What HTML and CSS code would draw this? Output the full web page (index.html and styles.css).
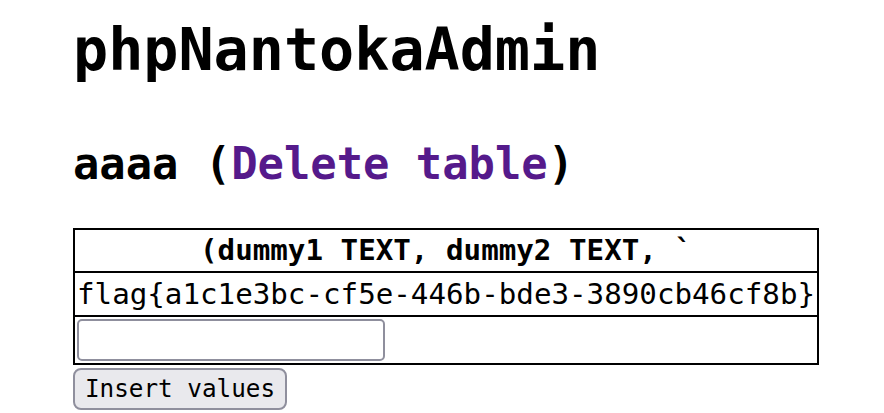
FILE: index.html
```html
<!DOCTYPE html>
<html>
<head>
<meta charset="utf-8">
<title>phpNantokaAdmin</title>
<link rel="stylesheet" href="styles.css">
</head>
<body>
<main class="page">
  <h1 class="title">phpNantokaAdmin</h1>
  <h2 class="table-name">aaaa (<a class="delete-link" href="#">Delete table</a>)</h2>
  <form class="insert-form">
    <table class="data-table">
      <thead>
        <tr><th class="cell head">(dummy1 TEXT, dummy2 TEXT, `</th></tr>
      </thead>
      <tbody>
        <tr><td class="cell value">flag{a1c1e3bc-cf5e-446b-bde3-3890cb46cf8b}</td></tr>
        <tr><td class="cell input-cell"><input class="text-input" type="text" name="values[]"></td></tr>
      </tbody>
    </table>
    <button class="insert-btn" type="button">Insert values</button>
  </form>
</main>
</body>
</html>
```
FILE: styles.css
```css
html, body {
  margin: 0;
  padding: 0;
  background: #ffffff;
}

body {
  font-family: "DejaVu Sans Mono", "Liberation Mono", monospace;
  font-size: 29.2px;
  color: #000000;
}

.page {
  padding: 16px 0 0 73px;
}

.title {
  margin: 0;
  font-size: 58.4px;
  font-weight: bold;
  line-height: 68px;
}

.table-name {
  margin: 54px 0 0 0;
  font-size: 43.8px;
  font-weight: bold;
  line-height: 51px;
}

.delete-link {
  color: #551a8b;
  text-decoration: none;
}

.insert-form {
  margin: 39px 0 0 0;
}

.data-table {
  border-collapse: collapse;
}

.cell {
  border: 2px solid #000000;
  padding: 2px;
  font-size: 29.2px;
}

.head {
  font-weight: bold;
  text-align: center;
  line-height: 37px;
}

.value {
  line-height: 38px;
}

.input-cell {
  line-height: 0;
}

.text-input {
  box-sizing: border-box;
  width: 308px;
  height: 42px;
  margin: 0;
  border: 2px solid #8f8f9d;
  border-radius: 5px;
  background: #ffffff;
  padding: 0 6px;
  font-family: inherit;
  font-size: 24.3px;
}

.insert-btn {
  display: block;
  box-sizing: border-box;
  width: 214px;
  height: 42px;
  margin: 3px 0 0 0;
  padding: 0;
  border: 2px solid #8f8f9d;
  border-radius: 8px;
  background: #e9e9ed;
  color: #000000;
  font-family: "DejaVu Sans Mono", "Liberation Mono", monospace;
  font-size: 24.3px;
  line-height: 38px;
  white-space: nowrap;
  text-align: center;
}
```
